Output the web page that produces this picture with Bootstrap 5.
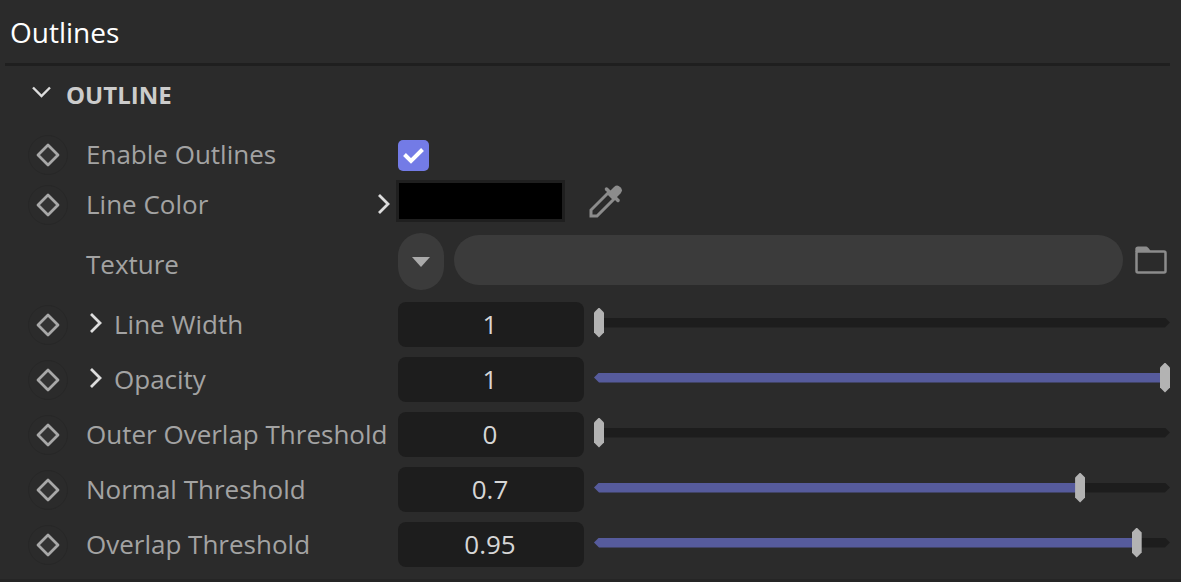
<!DOCTYPE html>
<html lang="en">
<head>
<meta charset="utf-8">
<meta name="viewport" content="width=device-width, initial-scale=1">
<title>Outlines</title>
<link rel="stylesheet" href="https://cdn.jsdelivr.net/npm/bootstrap@5.3.0/dist/css/bootstrap.min.css">
<style>
  body { background: #2b2b2b; color: #a3a3a3; font: 26px/36px "Open Sans", "Noto Sans", sans-serif; min-height: 100vh; border-bottom: 3px solid #252525; }
  .panel-title { font-size: 28px; line-height: 36px; color: #fff; padding: 14px 5px 13px; border-bottom: 3px solid #1f1f1f; }
  .panel { margin: 0 11px 0 5px; }
  .icon-btn { background: none; border: 0; padding: 0; color: #ccc; display: inline-flex; align-items: center; justify-content: center; flex: none; }
  .section-head { height: 64px; padding-left: 27px; padding-bottom: 6px; }
  .section-head .icon-btn { margin-right: 14px; padding-bottom: 6px; }
  .section-name { font-size: 24px; font-weight: 700; color: #ccc; }
  .prop { display: grid; grid-template-columns: 58px 312px minmax(0, 1fr); padding-left: 23px; align-items: center; min-height: 50px; }
  .prop > .controls { display: flex; align-items: center; }
  .prop label { white-space: nowrap; padding-bottom: 2px; }
  .expand-btn { padding-bottom: 3px; }
  .prop-texture { min-height: 63px; margin-bottom: 4px; }
  .prop-texture label { padding-top: 6px; }
  .prop-value { min-height: 55px; }
  .key-btn { width: 40px; height: 40px; border: 1px solid #272727; border-radius: 50%; color: #a8a8a8; }
  .form-check-input.tick { width: 31px; height: 31px; margin: 0; border: 0; border-radius: 5px; background-color: #737be6; }
  .form-check-input.tick:checked { background-color: #737be6; background-size: 31px; background-image: url("data:image/svg+xml,%3Csvg xmlns='http://www.w3.org/2000/svg' viewBox='0 0 31 31'%3E%3Cpath fill='none' stroke='%23fff' stroke-width='4' d='M6.500 14.500 13 21 24.500 9.500'/%3E%3C/svg%3E"); }
  .swatch { width: 169px; height: 42px; border: 3px solid #1f1f1f; background: #000; padding: 0; margin-left: -2px; }
  .drop-btn { width: 46px; height: 57px; border-radius: 23px; background: #3b3b3b; color: #aaa; }
  .path-field { height: 50px; border: 0; border-radius: 25px; background: #3b3b3b; color: #ddd; min-width: 0; padding: 0 24px; margin: 0 12px 3px 10px; }
  .path-field:focus { background: #3b3b3b; color: #ddd; }
  .browse-btn { margin: 0 3px 4px 0; }
  .num { width: 186px; height: 45px; flex: none; border: 0; border-radius: 8px; background: #1d1d1d; color: #d6d6d6; font-size: 26px; text-align: center; padding: 0 2px 2px 0; }
  .slider { display: grid; flex: 1; min-width: 0; align-items: center; margin: 0 0 4px 10px; }
  .slider::before, .slider input { grid-area: 1 / 1; }
  .slider::before { content: ""; height: 10px; background: linear-gradient(90deg, #565b9c var(--fill), #1d1d1d var(--fill)); clip-path: polygon(0 50%, 5px 0, calc(100% - 5px) 0, 100% 50%, calc(100% - 5px) 100%, 5px 100%); }
  .slider input { appearance: none; -webkit-appearance: none; background: none; width: 100%; height: 30px; margin: 0; position: relative; }
  .slider input::-webkit-slider-thumb { -webkit-appearance: none; width: 10px; height: 30px; background: #b3b3b3; clip-path: polygon(50% 0, 100% 5px, 100% 25px, 50% 100%, 0 25px, 0 5px); }
  .slider input::-moz-range-thumb { width: 10px; height: 30px; border: 0; border-radius: 0; background: #b3b3b3; clip-path: polygon(50% 0, 100% 5px, 100% 25px, 50% 100%, 0 25px, 0 5px); }
</style>
</head>
<body>
<svg class="d-none" aria-hidden="true">
  <symbol id="key" viewBox="0 0 24 24"><path d="M12 2 22 12 12 22 2 12Z" fill="#333" stroke="currentColor" stroke-width="2.800" stroke-linejoin="round"/></symbol>
  <symbol id="chev" viewBox="0 0 12 22"><path d="M1 2 10 11 1 20" fill="none" stroke="#ddd" stroke-width="2.800"/></symbol>
</svg>
<main class="panel">
  <h1 class="panel-title m-0 fw-normal">Outlines</h1>
  <div class="section-head d-flex align-items-center">
    <button class="icon-btn" type="button" aria-label="Collapse outline"><svg width="20" height="12" viewBox="0 0 20 12" fill="none" stroke="#ddd" stroke-width="2.400"><path d="M1 1.500 9.500 10 18 1.500"/></svg></button>
    <h2 class="section-name m-0">OUTLINE</h2>
  </div>

  <div class="prop">
    <button class="icon-btn key-btn" type="button" aria-label="Keyframe enable outlines"><svg width="24" height="24"><use href="#key"/></svg></button>
    <label for="enable">Enable Outlines</label>
    <div class="controls"><input class="form-check-input tick" type="checkbox" id="enable" checked></div>
  </div>
  <div class="prop">
    <button class="icon-btn key-btn" type="button" aria-label="Keyframe line color"><svg width="24" height="24"><use href="#key"/></svg></button>
    <div class="d-flex align-items-center justify-content-between"><label for="color">Line Color</label><button class="icon-btn expand-btn me-2" type="button" aria-label="Expand line color"><svg width="12" height="22"><use href="#chev"/></svg></button></div>
    <div class="controls pb-2"><button class="swatch" id="color" type="button" aria-label="Black"></button>
      <button class="icon-btn ms-4" type="button" aria-label="Pick color"><svg width="34" height="34" viewBox="0 0 34 34" fill="none" stroke="#8c8c8c"><path d="M2 26V32H8L25 15 19 9Z" stroke-width="3"/><path d="M17.500 5 29 16.500" stroke-width="3.500" stroke-linecap="round"/><path d="m20 8 5-5a4.600 4.600 0 0 1 6.500 6.500L26.500 14.500Z" fill="#8c8c8c" stroke="none"/></svg></button></div>
  </div>
  <div class="prop prop-texture">
    <span></span>
    <label for="texture">Texture</label>
    <div class="controls"><button class="icon-btn drop-btn" type="button" aria-label="Texture options"><svg width="18" height="10" viewBox="0 0 18 10"><path d="M0 0H18L9 10Z" fill="currentColor"/></svg></button>
      <input class="form-control path-field" id="texture" type="text">
      <button class="icon-btn browse-btn" type="button" aria-label="Browse"><svg width="32" height="28" viewBox="0 0 32 28"><rect x="1.500" y="5.500" width="29" height="21" rx="1.500" fill="none" stroke="#8c8c8c" stroke-width="2.500"/><path d="M.3 6V3Q.3 .5 3 .5H11Q13 .5 15.500 5V6Z" fill="#8c8c8c"/></svg></button></div>
  </div>
  <div class="prop prop-value">
    <button class="icon-btn key-btn" type="button" aria-label="Keyframe line width"><svg width="24" height="24"><use href="#key"/></svg></button>
    <div class="d-flex align-items-center"><button class="icon-btn expand-btn mx-1" type="button" aria-label="Expand line width"><svg width="12" height="22"><use href="#chev"/></svg></button><label class="ms-2" for="width">Line Width</label></div>
    <div class="controls"><input class="num" id="width" type="text" value="1"><div class="slider" style="--fill:0%"><input type="range" aria-label="Line Width" value="0"></div></div>
  </div>
  <div class="prop prop-value">
    <button class="icon-btn key-btn" type="button" aria-label="Keyframe opacity"><svg width="24" height="24"><use href="#key"/></svg></button>
    <div class="d-flex align-items-center"><button class="icon-btn expand-btn mx-1" type="button" aria-label="Expand opacity"><svg width="12" height="22"><use href="#chev"/></svg></button><label class="ms-2" for="opacity">Opacity</label></div>
    <div class="controls"><input class="num" id="opacity" type="text" value="1"><div class="slider" style="--fill:99%"><input type="range" aria-label="Opacity" value="100"></div></div>
  </div>
  <div class="prop prop-value">
    <button class="icon-btn key-btn" type="button" aria-label="Keyframe outer overlap threshold"><svg width="24" height="24"><use href="#key"/></svg></button>
    <label for="outer">Outer Overlap Threshold</label>
    <div class="controls"><input class="num" id="outer" type="text" value="0"><div class="slider" style="--fill:0%"><input type="range" aria-label="Outer Overlap Threshold" value="0"></div></div>
  </div>
  <div class="prop prop-value">
    <button class="icon-btn key-btn" type="button" aria-label="Keyframe normal threshold"><svg width="24" height="24"><use href="#key"/></svg></button>
    <label for="normal">Normal Threshold</label>
    <div class="controls"><input class="num" id="normal" type="text" value="0.7"><div class="slider" style="--fill:85%"><input type="range" aria-label="Normal Threshold" value="85"></div></div>
  </div>
  <div class="prop prop-value">
    <button class="icon-btn key-btn" type="button" aria-label="Keyframe overlap threshold"><svg width="24" height="24"><use href="#key"/></svg></button>
    <label for="overlap">Overlap Threshold</label>
    <div class="controls"><input class="num" id="overlap" type="text" value="0.95"><div class="slider" style="--fill:95%"><input type="range" aria-label="Overlap Threshold" value="95"></div></div>
  </div>
</main>
<script src="https://cdn.jsdelivr.net/npm/bootstrap@5.3.0/dist/js/bootstrap.bundle.min.js"></script>
</body>
</html>
